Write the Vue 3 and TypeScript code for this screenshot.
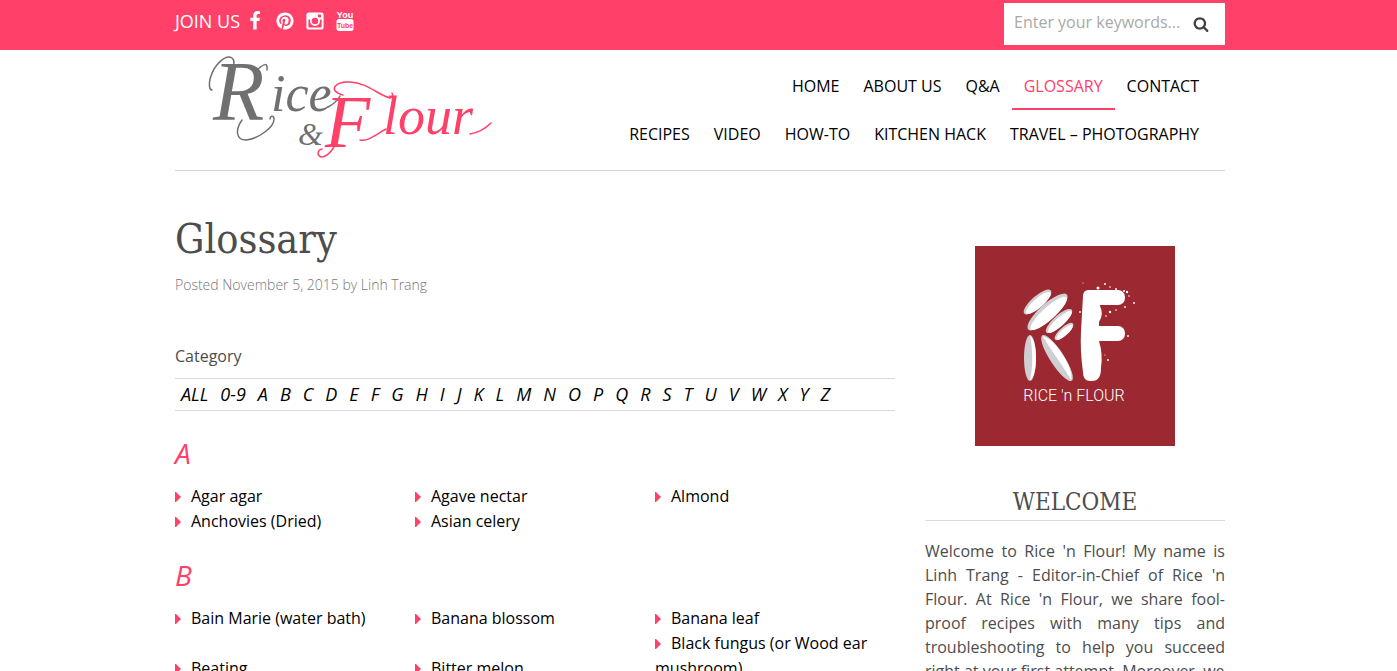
<script setup lang="ts">
import { ref } from 'vue'

interface NavItem {
  label: string
  active?: boolean
}

interface GlossarySection {
  letter: string
  terms: string[]
}

const keywords = ref('')

const navRows: NavItem[][] = [
  [
    { label: 'HOME' },
    { label: 'ABOUT US' },
    { label: 'Q&A' },
    { label: 'GLOSSARY', active: true },
    { label: 'CONTACT' },
  ],
  [
    { label: 'RECIPES' },
    { label: 'VIDEO' },
    { label: 'HOW-TO' },
    { label: 'KITCHEN HACK' },
    { label: 'TRAVEL – PHOTOGRAPHY' },
  ],
]

const filters: string[] = ['ALL', '0-9', ...'ABCDEFGHIJKLMNOPQRSTUVWXYZ'.split('')]

const sections: GlossarySection[] = [
  {
    letter: 'A',
    terms: ['Agar agar', 'Agave nectar', 'Almond', 'Anchovies (Dried)', 'Asian celery'],
  },
  {
    letter: 'B',
    terms: [
      'Bain Marie (water bath)',
      'Banana blossom',
      'Banana leaf',
      'Beating',
      'Bitter melon',
      'Black fungus (or Wood ear mushroom)',
    ],
  },
]
</script>

<template>
  <div class="page">
    <div class="topbar">
      <div class="wrap topbar-inner">
        <div class="social">
          <span class="join">JOIN US</span>
          <a href="#" aria-label="Facebook">
            <svg width="20" height="20" viewBox="0 0 1792 1792" fill="currentColor">
              <path d="M1343 12v264h-157q-86 0-116 36t-30 108v189h293l-39 296h-254v759h-306v-759h-255v-296h255v-218q0-186 104-288.5t277-102.5q147 0 228 12z" />
            </svg>
          </a>
          <a href="#" aria-label="Pinterest">
            <svg width="20" height="20" viewBox="0 0 1792 1792" fill="currentColor">
              <path d="M1664 896q0 209-103 385.5t-279.5 279.5-385.5 103q-111 0-218-32 59-93 78-164 9-34 54-211 20 39 73 67.5t114 28.5q121 0 216-68.5t147-188.5 52-270q0-114-59.5-214t-172.5-163-255-63q-105 0-196 29t-154.5 77-109 110.5-67 129.5-21.5 134q0 104 40 183t117 111q30 12 38-20 2-7 8-31t8-30q6-23-11-43-51-61-51-151 0-151 104.5-259.5t273.5-108.5q151 0 235.5 82t84.5 213q0 170-68.5 289t-175.5 119q-61 0-98-43.5t-23-104.5q8-35 26.5-93.5t30-103 11.5-75.5q0-50-27-83t-77-33q-62 0-105 57t-43 142q0 73 25 122l-99 418q-17 70-13 177-206-91-333-281t-127-423q0-209 103-385.5t279.5-279.5 385.5-103 385.5 103 279.5 279.5 103 385.5z" />
            </svg>
          </a>
          <a href="#" aria-label="Instagram">
            <svg width="20" height="20" viewBox="0 0 20 20">
              <rect x="2.4" y="2.4" width="15.2" height="15.2" rx="1.6" fill="none" stroke="currentColor" stroke-width="2" />
              <path d="M2 2h15v6.5h-15z" fill="currentColor" />
              <rect x="12.8" y="3.4" width="3.2" height="3.2" rx="0.5" fill="#ff4069" />
              <circle cx="10" cy="10" r="4.1" fill="#ff4069" stroke="currentColor" stroke-width="1.8" />
            </svg>
          </a>
          <a href="#" aria-label="YouTube">
            <svg width="20" height="22" viewBox="0 0 20 22">
              <text x="10" y="8" text-anchor="middle" class="yt yt-you">You</text>
              <rect x="1.5" y="9" width="17" height="12" rx="2.5" fill="currentColor" />
              <text x="10" y="18" text-anchor="middle" class="yt yt-tube">Tube</text>
            </svg>
          </a>
        </div>
        <form class="search" role="search" @submit.prevent>
          <input v-model="keywords" type="text" placeholder="Enter your keywords..." aria-label="Enter your keywords" />
          <button type="submit" aria-label="Search">
            <svg width="16" height="16" viewBox="0 0 1792 1792" fill="currentColor">
              <path d="M1216 832q0-185-131.5-316.5t-316.5-131.5-316.5 131.5-131.5 316.5 131.5 316.5 316.5 131.5 316.5-131.5 131.5-316.5zm512 832q0 52-38 90t-90 38q-54 0-90-38l-343-342q-179 124-399 124-143 0-273.5-55.5t-225-150-150-225-55.5-273.5 55.5-273.5 150-225 225-150 273.5-55.5 273.5 55.5 225 150 150 225 55.5 273.5q0 220-124 399l343 343q37 37 37 90z" />
            </svg>
          </button>
        </form>
      </div>
    </div>

    <header class="wrap">
      <div class="masthead">
        <a href="#" class="logo" aria-label="Rice &amp; Flour">
          <svg width="300" height="115" viewBox="0 0 300 115">
            <g class="ink">
              <text x="13" y="70" class="script" font-size="84">R</text>
              <text x="71" y="61" class="script" font-size="52">ice</text>
              <text x="98" y="95" class="script" font-size="32">&amp;</text>
            </g>
            <g class="line ink-line">
              <path d="M12 40C9 40 9 34 10 29C14 14 26 4 32 8C36 11 33 17 31 22" />
              <path d="M58 19C64 14 68 12 67 20" />
              <path d="M42 70C35 80 36 90 46 90C58 89 75 77 74 68C73 65 70 66 70 69" />
              <path d="M128 57Q136 53 140 46" />
            </g>
            <g class="flour">
              <text x="125" y="97" class="script" font-size="74">F</text>
              <text x="183" y="84" class="script" font-size="54">lour</text>
            </g>
            <g class="line flour-line">
              <path d="M143 45C126 40 137 31 150 32C168 33 178 45 190 48Q194 47 192 43" />
              <path d="M134 97C127 108 120 109 118 104Q118 100 122 99" />
              <path d="M160 90C168 92 177 84 186 79" />
              <path d="M270 84Q282 82 291 73" />
            </g>
          </svg>
        </a>
        <nav aria-label="Main">
          <ul v-for="(row, i) in navRows" :key="i">
            <li v-for="item in row" :key="item.label">
              <a href="#" :class="{ active: item.active }">{{ item.label }}</a>
            </li>
          </ul>
        </nav>
      </div>
    </header>

    <div class="wrap columns">
      <main>
        <h1>Glossary</h1>
        <p class="meta">Posted November 5, 2015 by Linh Trang</p>
        <p class="category">Category</p>
        <div class="filters">
          <a v-for="f in filters" :key="f" href="#">{{ f }}</a>
        </div>
        <section v-for="section in sections" :key="section.letter">
          <h2>{{ section.letter }}</h2>
          <ul class="terms">
            <li v-for="term in section.terms" :key="term">
              <svg class="caret" width="6" height="10" viewBox="0 0 6 10" aria-hidden="true">
                <path d="M0 0H1L6 5L1 10H0Z" fill="#ff4069" />
              </svg><a href="#">{{ term }}</a>
            </li>
          </ul>
        </section>
      </main>

      <aside>
        <svg class="badge" width="200" height="200" viewBox="0 0 200 200" role="img" aria-label="Rice 'n Flour">
          <rect width="200" height="200" fill="#9c2932" />
          <g fill="#fff">
            <g transform="translate(62.5 56) rotate(-41)">
              <ellipse rx="17.5" ry="6" fill="#cfcfd1" /><ellipse cy="1.3" rx="16" ry="4.6" />
            </g>
            <g transform="translate(72.5 66) rotate(-42)">
              <ellipse rx="26" ry="8" fill="#cfcfd1" /><ellipse cy="1.8" rx="24" ry="6.2" />
            </g>
            <g transform="translate(84 75) rotate(-42)">
              <ellipse rx="17" ry="5.5" fill="#cfcfd1" /><ellipse cy="1.3" rx="15.5" ry="4.2" />
            </g>
            <g transform="translate(89 85.5) rotate(-42)">
              <ellipse rx="12" ry="4.2" fill="#cfcfd1" /><ellipse cy="1" rx="10.5" ry="3.2" />
            </g>
            <g transform="translate(55 112)">
              <ellipse rx="6" ry="23" fill="#cfcfd1" /><path d="M0-22C8-18 8 18 0 22C3 8 3-8 0-22Z" />
            </g>
            <g transform="translate(82 112) rotate(-33)">
              <ellipse rx="7" ry="27" fill="#cfcfd1" /><path d="M0-26C9-18 9 18 0 26C1 8-1-8 0-26Z" />
            </g>
            <rect x="108" y="44" width="42" height="15" rx="7" />
            <rect x="108" y="80" width="42" height="15" rx="7" />
            <path d="M108 50Q108 44 114 44H123L125 60Q129 68 124 76V95Q128 108 126 122Q126 135 117 135Q108 136 108 126Q105 105 106 85Z" />
            <circle cx="108" cy="37" r="0.5" />
            <circle cx="123" cy="42" r="1.5" />
            <circle cx="130" cy="38" r="1" />
            <circle cx="135" cy="41" r="0.8" />
            <circle cx="141" cy="43" r="1" />
            <circle cx="149" cy="45" r="1" />
            <circle cx="152" cy="46" r="1.2" />
            <circle cx="154" cy="50" r="0.8" />
            <circle cx="159" cy="57" r="0.9" />
            <circle cx="150" cy="61" r="0.9" />
            <circle cx="135" cy="66" r="1.2" />
            <circle cx="131" cy="70" r="0.8" />
            <circle cx="141" cy="64" r="0.8" />
            <circle cx="153" cy="90" r="0.9" />
            <circle cx="133" cy="114" r="1" />
            <circle cx="130" cy="109" r="0.6" />
            <circle cx="105" cy="66" r="0.9" />
          </g>
          <text x="99" y="155" text-anchor="middle" class="badge-name">RICE 'n FLOUR</text>
        </svg>
        <h3>WELCOME</h3>
        <p class="intro">
          Welcome to Rice 'n Flour! My name is Linh Trang - Editor-in-Chief of Rice 'n Flour. At Rice 'n
          Flour, we share fool-proof recipes with many tips and troubleshooting to help you succeed right at
          your first attempt. Moreover, we
        </p>
      </aside>
    </div>
  </div>
</template>

<style>
body {
  margin: 0;
  background: #fff;
}
</style>

<style scoped>
.page {
  height: 100vh;
  overflow: hidden;
  font-family: "Open Sans", sans-serif;
  font-size: 16px;
  line-height: 24px;
  color: #4d4d4d;
}
a {
  color: inherit;
  text-decoration: none;
}
ul {
  list-style: none;
  margin: 0;
  padding: 0;
}
p {
  margin: 0;
}
.wrap {
  max-width: 1050px;
  margin: 0 auto;
  padding-left: 3px;
}
.topbar {
  background: #ff4069;
  color: #fff;
}
.topbar-inner {
  display: flex;
  justify-content: space-between;
  height: 50px;
}
.social {
  display: flex;
  align-items: center;
  gap: 10px;
  height: 42px;
}
.social a,
.social svg {
  display: block;
}
.join {
  font-size: 18px;
  margin-right: -5px;
}
.yt {
  font-family: "Liberation Sans", sans-serif;
  font-weight: 700;
}
.yt-you {
  font-size: 9px;
  fill: #fff;
}
.yt-tube {
  font-size: 7px;
  fill: #ff4069;
}
.search {
  display: flex;
  align-items: center;
  box-sizing: border-box;
  width: 221px;
  height: 42px;
  margin-top: 3px;
  padding-left: 10px;
  background: #fff;
}
.search input {
  flex: 1;
  min-width: 0;
  padding: 0 0 5px;
  border: 0;
  outline: 0;
  background: none;
  font: inherit;
  color: #4d4d4d;
}
.search input::placeholder {
  color: #a9a9a9;
  opacity: 1;
}
.search button {
  width: 40px;
  padding: 0 8px 0 0;
  border: 0;
  background: none;
  color: #404040;
}
.search button svg {
  display: block;
  margin: 0 auto;
}
.masthead {
  display: flex;
  justify-content: space-between;
  height: 120px;
  border-bottom: 1px solid #d5d5d5;
}
.logo {
  margin-left: 25px;
}
.logo svg {
  display: block;
}
.script {
  font-family: "Liberation Serif", serif;
  font-style: italic;
}
.ink {
  fill: #707070;
}
.flour {
  fill: #ff4069;
}
.line {
  fill: none;
  stroke-width: 1.5;
  stroke-linecap: round;
}
.ink-line {
  stroke: #707070;
}
.flour-line {
  stroke: #ff4069;
}
nav {
  padding: 12px 14px 0 0;
}
nav ul {
  display: flex;
  justify-content: flex-end;
}
nav a {
  display: block;
  padding: 0 12px;
  border: solid transparent;
  border-width: 2px 0;
  line-height: 44px;
  color: #000;
}
nav a.active {
  color: #ff4069;
  border-bottom-color: #ff4069;
}
.columns {
  display: flex;
  gap: 30px;
}
main {
  flex: 1;
  min-width: 0;
  padding-top: 44px;
}
h1,
h3 {
  font-family: "Roboto Slab", "DejaVu Serif Condensed", "DejaVu Serif", serif;
  font-weight: 400;
}
h1 {
  margin: 0;
  font-size: 41px;
  line-height: 48px;
}
.meta {
  margin-top: 10px;
  font-size: 14px;
  font-weight: 300;
  color: #777;
}
.category {
  margin: 47px 0 10px;
}
.filters {
  display: flex;
  gap: 12px;
  margin-bottom: 25px;
  padding: 0 6px;
  border: solid #d9d9d9;
  border-width: 1px 0;
  font-size: 18px;
  font-style: italic;
  line-height: 31px;
  color: #000;
}
h2 {
  margin: 24px 0 14px;
  font-size: 28px;
  font-weight: 400;
  font-style: italic;
  line-height: 34px;
  color: #ff4069;
}
.terms {
  display: grid;
  grid-template-columns: repeat(3, 1fr);
  align-items: end;
  line-height: 25px;
  color: #000;
}
.caret {
  margin-right: 10px;
}
aside {
  width: 300px;
  padding-top: 75px;
}
.badge {
  display: block;
  margin: 0 auto;
}
.badge-name {
  font-family: Roboto, sans-serif;
  font-size: 16px;
  font-weight: 300;
  fill: #fff;
}
h3 {
  margin: 40px 0 18px;
  padding-bottom: 1px;
  border-bottom: 1px solid #d9d9d9;
  font-size: 24px;
  line-height: 33px;
  text-align: center;
}
.intro {
  text-align: justify;
}
</style>
